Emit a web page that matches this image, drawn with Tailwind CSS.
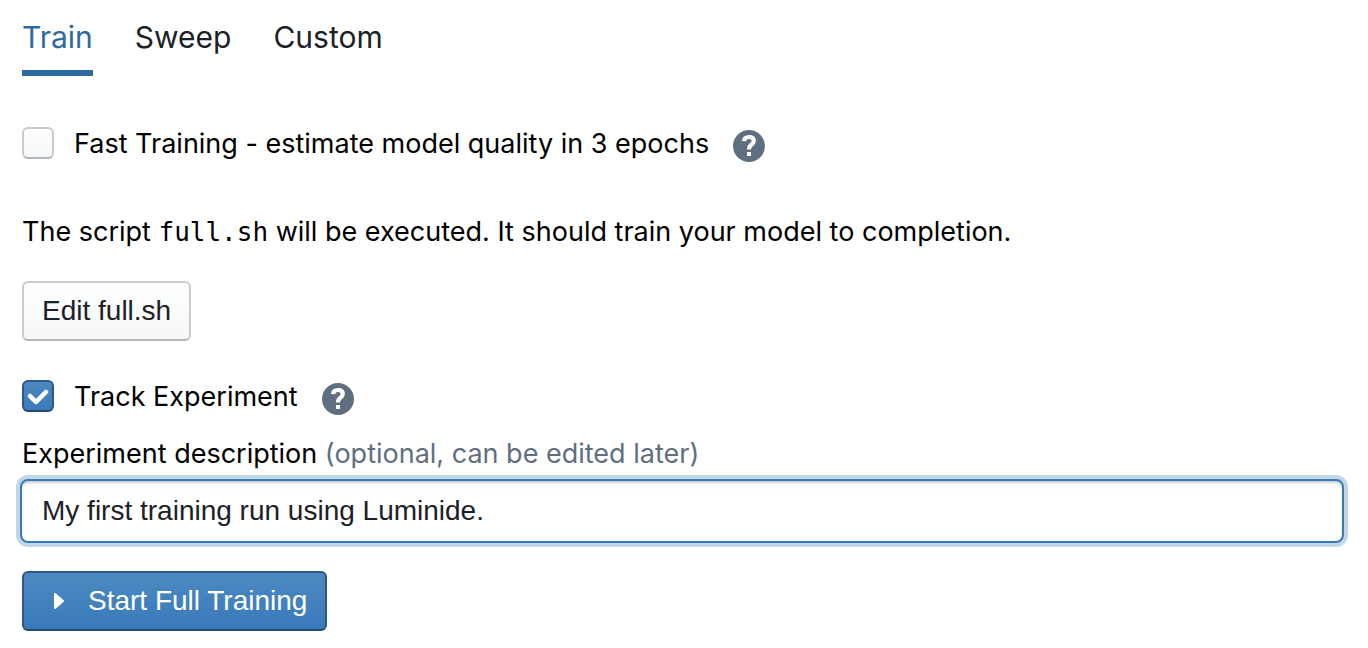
<!DOCTYPE html>
<html lang="en">
<head>
<meta charset="utf-8">
<meta name="viewport" content="width=device-width, initial-scale=1">
<title>Train</title>
<script src="https://cdn.jsdelivr.net/npm/@tailwindcss/browser@4"></script>
</head>
<body class="bg-white font-['Inter',sans-serif] text-[27px] leading-8 text-black">
<svg class="hidden" aria-hidden="true">
  <symbol id="help" viewBox="0 0 16 16">
    <circle cx="8" cy="8" r="8" fill="#5f6f7f"/>
    <path d="M5.5 5.6C5.6 4.2 6.5 3.5 8 3.5c1.5 0 2.4.75 2.4 1.9 0 1-.6 1.5-1.3 2.05C8.4 8 8 8.5 8 9.8" fill="none" stroke="#fff" stroke-width="2.1"/>
    <path d="M7 11h2v2H7z" fill="#fff"/>
  </symbol>
</svg>
<main class="pt-5 pr-[26px] pl-[22px]">
  <div role="tablist" class="flex gap-[42px] text-[30px] leading-[34px]">
    <button role="tab" aria-selected="true" class="border-b-6 border-[#2f69a3] pb-4 text-[#2f69a3]">Train</button>
    <button role="tab" aria-selected="false" class="border-b-6 border-transparent pb-4 text-[#1b2127]">Sweep</button>
    <button role="tab" aria-selected="false" class="border-b-6 border-transparent pb-4 text-[#1b2127]">Custom</button>
  </div>

  <div class="mt-[51px] flex items-start">
    <label class="flex items-start gap-5 leading-[34px]">
      <input type="checkbox" class="size-8 shrink-0 appearance-none rounded-md border-2 border-[#c9cbcd] border-b-[#b3b6b9] bg-linear-to-b from-white to-[#f5f7f9]">
      <span>Fast Training - estimate model quality in 3 epochs</span>
    </label>
    <button aria-label="About fast training" class="mt-[3px] ml-6"><svg class="size-8"><use href="#help"/></svg></button>
  </div>

  <p class="mt-[54px]">The script <code class="font-['DejaVu_Sans_Mono',monospace] text-[26px]">full.sh</code> will be executed. It should train your model to completion.</p>

  <button class="mt-[33px] block h-[60px] rounded-md border-2 border-[#c9cbcd] border-b-[#b3b6b9] bg-linear-to-b from-white to-[#f5f7f9] px-[18px] font-['Liberation_Sans',sans-serif] text-[28px] text-[#1b2127]">Edit full.sh</button>

  <div class="mt-[39px] flex items-start">
    <label class="flex items-start gap-5 leading-[34px]">
      <span class="grid">
        <input type="checkbox" checked class="peer col-start-1 row-start-1 size-8 appearance-none rounded-md border-2 border-[#2b5884] border-b-[#234a70] bg-linear-to-b from-[#4c89c2] to-[#3a7ab9]">
        <svg viewBox="0 0 16 16" class="pointer-events-none invisible col-start-1 row-start-1 size-8 peer-checked:visible" fill="#fff"><path stroke="#fff" stroke-width=".3" d="M12 5c-.28 0-.53.11-.71.29L7 9.59l-2.29-2.3a1.003 1.003 0 00-1.42 1.42l3 3c.18.18.43.29.71.29s.53-.11.71-.29l5-5A1.003 1.003 0 0012 5z"/></svg>
      </span>
      <span>Track Experiment</span>
    </label>
    <button aria-label="About experiment tracking" class="mt-[3px] ml-6"><svg class="size-8"><use href="#help"/></svg></button>
  </div>

  <label for="description" class="mt-[23px] block">Experiment description <span class="text-[#5f6f7f]">(optional, can be edited later)</span></label>
  <div class="-mx-0.5 mt-[9px]">
    <input id="description" type="text" value="My first training run using Luminide." class="block h-16 w-full rounded-lg border-2 border-[#367bbb] bg-white px-5 font-['Liberation_Sans',sans-serif] text-[28px] text-[#1b2127] shadow-[0_0_0_4px_#c3d6e8,inset_0_2px_2px_rgba(17,20,24,0.2)] outline-none">
  </div>

  <button class="mt-7 flex h-[60px] items-center gap-3.5 rounded-md border-2 border-[#2b5884] border-b-[#234a70] bg-linear-to-b from-[#4c89c2] to-[#3a7ab9] px-[18px] font-['Liberation_Sans',sans-serif] text-[28px] text-white">
    <svg viewBox="0 0 16 16" class="size-8" fill="#fff"><path d="M11 8c0-.15-.07-.28-.17-.37l-4-3.5A.495.495 0 006 4.5v7a.495.495 0 00.83.37l4-3.5c.1-.09.17-.22.17-.37z"/></svg>
    <span>Start Full Training</span>
  </button>
</main>
</body>
</html>
